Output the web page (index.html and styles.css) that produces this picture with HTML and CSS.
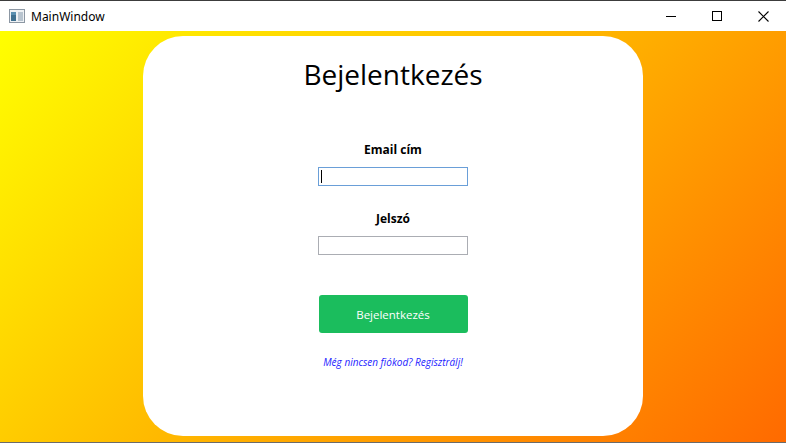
FILE: index.html
```html
<!DOCTYPE html>
<html>
<head>
<meta charset="utf-8">
<link rel="stylesheet" href="styles.css">
</head>
<body>
<div class="window">
  <div class="titlebar">
    <div class="app">
      <svg class="app-icon" width="16" height="16" viewBox="0 0 16 16">
        <rect x="0.5" y="1.5" width="15" height="13" fill="#eef1f4" stroke="#8c97a3"/>
        <rect x="2" y="4" width="5" height="9" fill="#3f6f8f"/>
        <rect x="2" y="4" width="5" height="3" fill="#5a8fb0"/>
        <rect x="9" y="4" width="5" height="9" fill="#b8c4cf"/>
      </svg>
      <span class="app-title">MainWindow</span>
    </div>
    <div class="controls">
      <div class="ctl">
        <svg width="10" height="10" viewBox="0 0 10 10"><line x1="0" y1="5.5" x2="10" y2="5.5" stroke="#000" stroke-width="1"/></svg>
      </div>
      <div class="ctl">
        <svg width="10" height="10" viewBox="0 0 10 10"><rect x="0.5" y="0.5" width="9" height="9" fill="none" stroke="#000" stroke-width="1"/></svg>
      </div>
      <div class="ctl">
        <svg width="11" height="11" viewBox="0 0 11 11"><path d="M0.5 0.5 L10.5 10.5 M10.5 0.5 L0.5 10.5" stroke="#000" stroke-width="1.1"/></svg>
      </div>
    </div>
  </div>
  <div class="content">
    <div class="card">
      <h1 class="title">Bejelentkezés</h1>
      <div class="field">
        <label class="label">Email cím</label>
        <div class="input focused"><span class="caret"></span></div>
      </div>
      <div class="field second">
        <label class="label">Jelszó</label>
        <div class="input"></div>
      </div>
      <button class="btn">Bejelentkezés</button>
      <a class="link">Még nincsen fiókod? Regisztrálj!</a>
    </div>
  </div>
</div>
</body>
</html>
```
FILE: styles.css
```css
* { box-sizing: border-box; }
html, body { margin: 0; padding: 0; }
body {
  width: 786px;
  height: 443px;
  overflow: hidden;
  font-family: "Open Sans", "Noto Sans", sans-serif;
  background: #fff;
}
.window {
  width: 786px;
  height: 443px;
  display: flex;
  flex-direction: column;
  border-top: 1px solid #3c3c3c;
  border-bottom: 1px solid #6b6b6b;
}
.titlebar {
  height: 30px;
  background: #fff;
  display: flex;
  align-items: center;
  justify-content: space-between;
}
.app {
  display: flex;
  align-items: center;
  padding-left: 9px;
}
.app-icon { display: block; }
.app-title {
  margin-left: 6px;
  font-family: "Noto Sans", "Open Sans", sans-serif;
  font-size: 12px;
  color: #000;
}
.controls {
  display: flex;
  height: 100%;
}
.ctl {
  width: 46px;
  height: 100%;
  display: flex;
  align-items: center;
  justify-content: center;
}
.content {
  flex: 1;
  background: linear-gradient(135deg, #ffff00 0%, #ff6a00 100%);
  display: flex;
  justify-content: center;
  padding-top: 5px;
}
.card {
  width: 500px;
  height: 400px;
  background: #fff;
  border-radius: 40px;
  display: flex;
  flex-direction: column;
  align-items: center;
}
.title {
  margin: 19px 0 0 0;
  font-family: "Open Sans", sans-serif;
  font-weight: 400;
  font-size: 28px;
  line-height: 38px;
  color: #000;
}
.field {
  display: flex;
  flex-direction: column;
  align-items: center;
  margin-top: 47px;
}
.field.second { margin-top: 23px; }
.label {
  font-family: "Open Sans", sans-serif;
  font-weight: 700;
  font-size: 12px;
  line-height: 20px;
  color: #000;
}
.input {
  width: 150px;
  height: 19px;
  margin-top: 7px;
  border: 1px solid #abadb3;
  background: #fff;
  position: relative;
}
.input.focused { border-color: #6a9fd8; }
.caret {
  position: absolute;
  left: 2px;
  top: 2px;
  width: 1px;
  height: 13px;
  background: #000;
}
.btn {
  margin-top: 40px;
  width: 149px;
  height: 38px;
  border: none;
  border-radius: 3px;
  background: #1bbd5d;
  color: #fff;
  font-family: "Open Sans", sans-serif;
  font-size: 11.5px;
  padding: 0;
}
.link {
  margin-top: 22px;
  font-family: "Open Sans", sans-serif;
  font-style: italic;
  font-size: 10px;
  line-height: 14px;
  color: #2424ff;
}
```
